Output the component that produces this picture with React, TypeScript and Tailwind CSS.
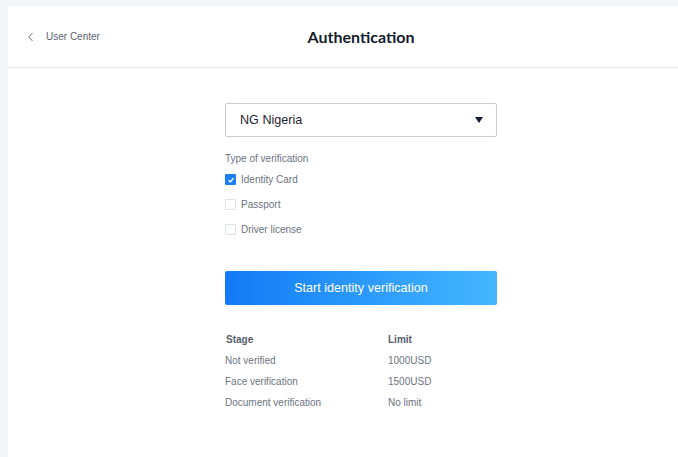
import React from "react";

const rows = [
  ["Not verified", "1000USD"],
  ["Face verification", "1500USD"],
  ["Document verification", "No limit"],
];

function Check({ checked }: { checked?: boolean }) {
  return checked ? (
    <span className="flex h-[11px] w-[11px] items-center justify-center rounded-[1px] bg-[#1a7ff5]">
      <svg width="8" height="8" viewBox="0 0 8 8">
        <path d="M1.5 4.2 L3.3 5.8 L6.6 2.3" fill="none" stroke="#fff" strokeWidth="1.3" />
      </svg>
    </span>
  ) : (
    <span className="h-[11px] w-[11px] rounded-[1px] border border-[#dfe2e6] bg-white" />
  );
}

export default function App() {
  return (
    <div
      className="h-[457px] w-[678px] overflow-hidden bg-[#f3f6f8] pl-[8px] pt-[6px]"
      style={{ fontFamily: '"Liberation Sans", Arial, sans-serif' }}
    >
      <div className="h-[460px] w-[706px] bg-white">
        <div className="grid h-[62px] grid-cols-[1fr_auto_1fr] items-center border-b border-[#e4e6e9]">
          <div className="flex items-center pl-[19px] text-[10px] text-[#5b6370]">
            <svg width="8" height="10" viewBox="0 0 8 10" className="mr-[11px]">
              <path d="M5.5 1 L1.8 5 L5.5 9" fill="none" stroke="#6b7280" strokeWidth="1" />
            </svg>
            <span>User Center</span>
          </div>
          <div
            className="text-[16px] font-bold text-[#141c2e]"
            style={{ fontFamily: 'Lato, "Liberation Sans", sans-serif' }}
          >
            Authentication
          </div>
          <div />
        </div>
        <div className="flex justify-center">
          <div className="w-[272px] pt-[35px]">
            <div className="flex h-[34px] items-center justify-between rounded-[2px] border border-[#c9cdd2] pl-[14px] pr-[13px]">
              <span className="text-[12.6px] text-[#1f2430]">NG Nigeria</span>
              <svg width="8" height="6" viewBox="0 0 8 6">
                <path d="M0 0 L8 0 L4 6 Z" fill="#141c2e" />
              </svg>
            </div>
            <div className="mt-[14px] h-[16px] text-[10px] leading-[16px] text-[#6b7380]">
              Type of verification
            </div>
            {[
              ["Identity Card", true],
              ["Passport", false],
              ["Driver license", false],
            ].map(([label, c]) => (
              <div key={label as string} className="flex h-[25px] items-center gap-[5px] text-[10px] text-[#6b7380]">
                <Check checked={c as boolean} />
                <span>{label as string}</span>
              </div>
            ))}
            <div className="mt-[29px] flex h-[34px] items-center justify-center rounded-[2px] bg-gradient-to-r from-[#127af6] to-[#45b6ff] text-[12.6px] text-white">
              Start identity verification
            </div>
            <div className="mt-[24px] text-[10px]">
              <div className="grid h-[21px] grid-cols-[163px_1fr] items-center font-bold text-[#555d6b]">
                <span className="pl-[1px]">Stage</span>
                <span>Limit</span>
              </div>
              {rows.map(([a, b]) => (
                <div key={a} className="grid h-[21px] grid-cols-[163px_1fr] items-center text-[#6b7380]">
                  <span>{a}</span>
                  <span>{b}</span>
                </div>
              ))}
            </div>
          </div>
        </div>
      </div>
    </div>
  );
}
